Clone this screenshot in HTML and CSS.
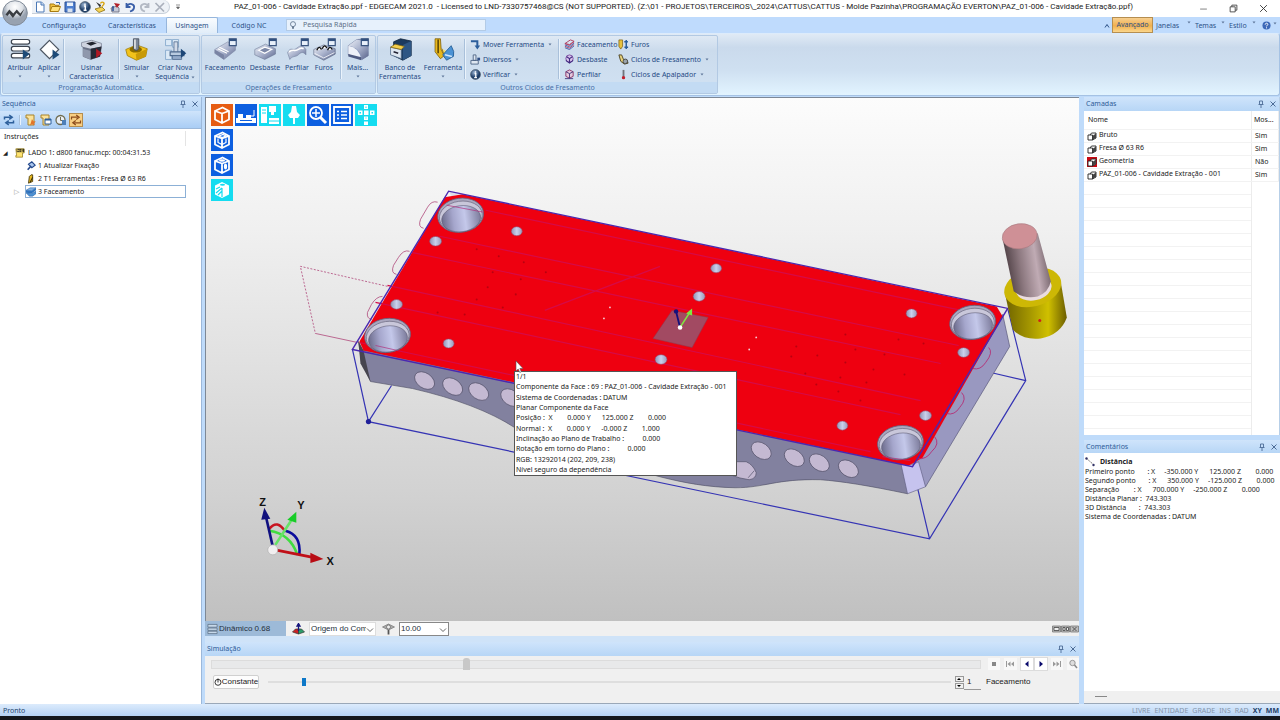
FILE: index.html
```html
<!DOCTYPE html>
<html lang="pt-BR">
<head>
<meta charset="utf-8">
<title>EDGECAM 2021.0</title>
<link rel="stylesheet" href="styles.css">
</head>
<body>
<svg class="defs" aria-hidden="true">
  <defs>
    <linearGradient id="steel" x1="0" x2="1"><stop offset="0" stop-color="#6d6c8c"/><stop offset=".3" stop-color="#a5a6cc"/><stop offset=".6" stop-color="#c4c8ea"/><stop offset="1" stop-color="#7d7c9c"/></linearGradient>
    <linearGradient id="pin" x1="0" x2="1"><stop offset="0" stop-color="#8f93b4"/><stop offset=".5" stop-color="#c9d0ec"/><stop offset="1" stop-color="#9a98b8"/></linearGradient>
    <linearGradient id="shank" x1="0" x2="1" y1=".2" y2="0"><stop offset="0" stop-color="#4f4045"/><stop offset=".3" stop-color="#8c787f"/><stop offset=".62" stop-color="#c0abb4"/><stop offset="1" stop-color="#55464c"/></linearGradient>
    <linearGradient id="gold" x1="0" x2="1"><stop offset="0" stop-color="#6f6300"/><stop offset=".4" stop-color="#a49600"/><stop offset=".7" stop-color="#d0c000"/><stop offset="1" stop-color="#6b5d00"/></linearGradient>
    <linearGradient id="metal" x1="0" x2="1" y2="1"><stop offset="0" stop-color="#eef1f8"/><stop offset=".5" stop-color="#a9b2cc"/><stop offset="1" stop-color="#59648c"/></linearGradient>
    <radialGradient id="orb" cx=".5" cy=".25"><stop offset="0" stop-color="#fff"/><stop offset=".6" stop-color="#dfe3e8"/><stop offset="1" stop-color="#98a2b0"/></radialGradient>
    <radialGradient id="ball" cx=".4" cy=".3"><stop offset="0" stop-color="#9db6d4"/><stop offset="1" stop-color="#1c3c66"/></radialGradient>
    <symbol id="i-info" viewBox="0 0 12 12"><circle cx="6" cy="6" r="5.4" fill="url(#ball)" stroke="#456" stroke-width=".7"/><path d="M6 2.4v1.6M5 5h1.3v4M4.6 9.3h3" stroke="#fff" stroke-width="1.4" fill="none"/></symbol>
    <symbol id="i-pin" viewBox="0 0 8 8"><path d="M2.5 1h3v3.4M2.5 1v3.4M1.5 4.5h5M4 4.5V8" stroke="#4d6c96" stroke-width=".9" fill="none"/></symbol>
    <symbol id="i-x" viewBox="0 0 8 8"><path d="M1.5 1.5l5 5M6.5 1.5l-5 5" stroke="#4d6c96" fill="none"/></symbol>
    <symbol id="i-chev" viewBox="0 0 8 8"><path d="M1 2.5l3 3 3-3" stroke="#555" fill="none" stroke-width=".9"/></symbol>
    <symbol id="i-drop" viewBox="0 0 4 3"><path d="M.5.5h3L2 2.4z" fill="#5f7799"/></symbol>
    <symbol id="i-stack" viewBox="0 0 10 10"><path d="M1 4h4.5v5H1zM3 4l1.500-2H9v5L5.500 9" fill="#fff" stroke="#222" stroke-width=".9"/><path d="M6 4.600L9 2.400V7L6 8.600z" fill="#444"/></symbol>
    <symbol id="i-refresh" viewBox="0 0 12 12"><path d="M1.500 5.500V3.200h6.200M6.200 1l3 2.200-3 2.200M10.500 6.500v2.300H4.300M5.800 6.600l-3 2.200 3 2.200" fill="none" stroke="#2d5f9b" stroke-width="1.500"/></symbol>
    <symbol id="i-cube" viewBox="0 0 22 22"><path d="M4 7L11 9.500v9.500l-7-3.500zM11 9.500l7-2.500v8.500L11 19M4 7l7.500-3.500L18 7" fill="none" stroke="#fff" stroke-width="1.800" stroke-linejoin="round"/></symbol>
    <symbol id="i-win" viewBox="0 0 30 30"><path d="M20 1h9v9h-9z" fill="#e8f0fa" stroke="#3b5680" stroke-width="1.600"/><path d="M20 1h9v3h-9z" fill="#31507f"/></symbol>
    <symbol id="i-bore" viewBox="-25 -20 50 40"><g transform="rotate(-8)"><ellipse rx="23" ry="17" fill="#a9a6be" stroke="#67607c" stroke-width=".8"/><ellipse cy="1" rx="21.500" ry="15" fill="#c9c7da" stroke="#6d6a82" stroke-width=".7"/><ellipse cy="3.500" rx="19.500" ry="13" fill="url(#steel)" stroke="#55536c" stroke-width=".5"/></g></symbol>
  </defs>
</svg>

<header class="titlebar">
  <button class="orb" aria-label="Menu"><svg viewBox="0 0 26 26"><circle cx="13" cy="13" r="12.300" fill="url(#orb)" stroke="#828c99" stroke-width="1"/><path d="M3.500 14.500l3.800-5 4 4 3.500-4 3.500 4 4-4.500-3.800 7.500-4-3.600-3.600 5-3.500-4.500-2 2.600z" fill="#3a3d42"/></svg></button>
  <div class="qat">
    <svg viewBox="0 0 12 12"><path d="M2.500 1h5l2.500 2.500V11h-7.500z" fill="#fff" stroke="#4a78b6"/><path d="M7 1v3h3" fill="#cfe0f4" stroke="#4a78b6"/></svg>
    <svg viewBox="0 0 12 12"><path d="M1 10V3h4l1 1.300h4V6" fill="#f3c23c" stroke="#a87c12"/><path d="M1 10.500l2-5h8.500l-2 5z" fill="#ffe27a" stroke="#a87c12"/><path d="M7 1.500h3.500v2" fill="none" stroke="#3668b0"/></svg>
    <svg viewBox="0 0 12 12"><path d="M1 1h10v10H1z" fill="#4d7fd0" stroke="#2a4f92"/><path d="M3 1.500h6v3.500H3z" fill="#e9f1fb"/><path d="M3.500 7.500h5V11h-5z" fill="#d8e2ee"/></svg>
    <svg><use href="#i-info"/></svg>
    <svg viewBox="0 0 12 12"><path d="M1 8l7-2 3 3-6 2.500z" fill="#f6d353" stroke="#8c7012" stroke-width=".8"/><path d="M2 1l4 5.500 1-2.500z" fill="#333"/><path d="M6.500 2.500c1-2.500 5-1 3 1.200-1 .8-1.200 1-1.200 2" fill="none" stroke="#d8a410" stroke-width="1.400"/></svg>
    <svg viewBox="0 0 12 12"><path d="M2 7l6-2 2 2v4H3z" fill="#c6cbd8" stroke="#667" stroke-width=".8"/><path d="M5 2l6 1-3 4z" fill="#b32028"/><path d="M4 5v5" stroke="#2a4f92" stroke-width="1.500"/></svg>
    <svg viewBox="0 0 12 12"><path d="M2.500 2v4h4M3 5.500C5 1 11 3 10 7c-.5 2-2 3-4 3.500" fill="none" stroke="#3a5fa8" stroke-width="1.800"/></svg>
    <svg viewBox="0 0 12 12"><path d="M9.500 2v4h-4M9 5.500C7 1 1 3 2 7c.5 2 2 3 4 3.500" fill="none" stroke="#b3b9c4" stroke-width="1.800"/></svg>
    <svg viewBox="0 0 12 12"><path d="M1.500 2l8.500 8.500M10 2l-8.500 8.500" stroke="#aab0bc" stroke-width="1.700"/></svg>
  </div>
  <span class="qatmore"><svg viewBox="0 0 6 6"><path d="M1 1h4M1.500 3h3L3 5z" fill="#666" stroke="#666" stroke-width=".7"/></svg></span>
  <h1 class="title">PAZ_01-006 - Cavidade Extração.ppf - EDGECAM 2021.0&nbsp; - Licensed to LND-7330757468@CS (NOT SUPPORTED). (Z:\01 - PROJETOS\TERCEIROS\_2024\CATTUS\CATTUS - Molde Pazinha\PROGRAMAÇÃO EVERTON\PAZ_01-006 - Cavidade Extração.ppf)</h1>
  <div class="wincontrols">
    <button aria-label="Minimizar"><svg viewBox="0 0 8 8"><path d="M1 4.500h6" stroke="#777" stroke-width=".8"/></svg></button>
    <button aria-label="Restaurar"><svg viewBox="0 0 8 8"><path d="M1 2.500h4.500V7H1zM2.500 2.500V1H7v4.500H5.500" fill="none" stroke="#444" stroke-width=".8"/></svg></button>
    <button aria-label="Fechar"><svg viewBox="0 0 8 8"><path d="M1 1l6 6M7 1L1 7" stroke="#333" stroke-width=".8"/></svg></button>
  </div>
</header>

<nav class="tabs">
  <button class="tab t1">Configuração</button>
  <button class="tab t2">Características</button>
  <button class="tab t3 active">Usinagem</button>
  <button class="tab t4">Código NC</button>
  <label class="search"><svg viewBox="0 0 8 10"><circle cx="4" cy="3.500" r="2.800" fill="none" stroke="#5a6e88" stroke-width=".9"/><path d="M3 6.500h2v2H3z" fill="#5a6e88"/></svg><input type="text" placeholder="Pesquisa Rápida" aria-label="Pesquisa Rápida"></label>
  <div class="tabright">
    <button class="caret" aria-label="Recolher"><svg viewBox="0 0 6 6"><path d="M1 4.500l2-3 2 3" fill="none" stroke="#2d5288"/></svg></button>
    <button class="adv">Avançado</button>
    <button class="m1">Janelas</button><svg class="dd"><use href="#i-drop"/></svg>
    <button class="m2">Temas</button><svg class="dd"><use href="#i-drop"/></svg>
    <button class="m3">Estilo</button><svg class="dd"><use href="#i-drop"/></svg>
    <svg class="help" viewBox="0 0 10 10"><circle cx="5" cy="5" r="4.500" fill="#3c68b8"/><path d="M3.500 4c0-2 3-2 3-.2 0 1-1.500 1-1.500 2.200M5 7v1.200" stroke="#fff" stroke-width="1.100" fill="none"/></svg><svg class="dd"><use href="#i-drop"/></svg>
  </div>
</nav>

<section class="ribbon">
  <div class="group g1">
    <div class="tools">
      <button class="big"><svg viewBox="0 0 30 30"><g fill="#fff" stroke="#3c4450" stroke-width="1.500"><rect x="3" y="2" width="24" height="6" rx="3"/><rect x="3" y="11" width="24" height="6" rx="3"/><rect x="3" y="20" width="24" height="6" rx="3"/></g><path d="M18 15l9 6-9 7z" fill="#1d4b78"/></svg><span>Atribuir</span><i><svg class="dd"><use href="#i-drop"/></svg></i></button>
      <button class="big"><svg viewBox="0 0 30 30"><path d="M15 3l12 12-12 12L3 15z" fill="#fff" stroke="#4b5460" stroke-width="1.500"/><path d="M19 15l9 7-9 6z" fill="#1d4b78"/></svg><span>Aplicar</span><i><svg class="dd"><use href="#i-drop"/></svg></i></button>
      <hr>
      <button class="big"><svg viewBox="0 0 30 30"><path d="M2 6l13-3 13 4v5l-2 12-12 4-10-4V12L2 11z" fill="#cfd4e0" stroke="#7c8496"/><path d="M2 11l12 3 14-3-2 13-12 4-10-4V12z" fill="#6a7286"/><path d="M8 7l8-2 6 2-8 3z" fill="#20242e"/><path d="M4 14l10 3v11l-10-4z" fill="#8f98ac"/><path d="M14 14l14-3-2 13-12 4z" fill="#262a36"/><path d="M21 14l8 6-8 6z" fill="#b01824"/></svg><span>Usinar<br>Característica</span></button>
      <hr>
      <button class="big"><svg viewBox="0 0 30 30"><path d="M1 15l14-6 14 5-2 10-12 5-12-6z" fill="#f2c21b" stroke="#9a7908"/><path d="M14 21l15-7-2 10-12 5z" fill="#c89a08"/><ellipse cx="14" cy="15" rx="8" ry="4" fill="#8a6b00"/><path d="M11 1h7v13c-2 3-5 3-7 0z" fill="#7b8697" stroke="#3d4654"/><path d="M13 2v12" stroke="#eee" stroke-width="2"/></svg><span>Simular</span><i><svg class="dd"><use href="#i-drop"/></svg></i></button>
      <button class="big"><svg viewBox="0 0 30 30"><path d="M2 2h8v8H2zM11 2h8v10h-8zM2 16h8v12H2z" fill="#dbe9f6" stroke="#7aa0c6"/><path d="M13 5h5v14h-5z" fill="#d2dbe8" stroke="#4a668a"/><path d="M8 18h18v5H8z" fill="#b9cbe0" stroke="#4a668a" stroke-width="1.500"/><path d="M11 23h12v5H11z" fill="#93aaca" stroke="#4a668a"/><path d="M22 14l7 6-7 6z" fill="#1c4677"/></svg><span>Criar Nova<br>Sequência <svg class="dd"><use href="#i-drop"/></svg></span></button>
    </div>
    <h2>Programação Automática.</h2>
  </div>
  <div class="group g2">
    <div class="tools">
      <button class="big"><svg viewBox="0 0 30 30"><path d="M1 15L18 5l10 5v6L13 28 1 20z" fill="url(#metal)" stroke="#7a86a2" stroke-width=".7"/><path d="M1 15l12 7v6L1 20z" fill="#7984a4"/><path d="M7 12l12 6M5 14l12 6" stroke="#fff" stroke-width="1.500" fill="none"/><use href="#i-win"/></svg><span>Faceamento</span></button>
      <button class="big"><svg viewBox="0 0 30 30"><path d="M1 15l14-7 13 6v7l-14 7-13-6z" fill="url(#metal)" stroke="#66728e" stroke-width=".7"/><path d="M6 16l8-4 9 3-9 5z" fill="#7d89a8" stroke="#fff" stroke-width="1.500"/><use href="#i-win"/></svg><span>Desbaste</span></button>
      <button class="big"><svg viewBox="0 0 30 30"><path d="M2 19c4-8 7-2 11-5s8-7 13 1v7c-4-5-7-3-10 0s-8 1-11 6z" fill="url(#metal)" stroke="#6d7a98" stroke-width=".7"/><path d="M4 18c5-4 8 0 12-3s5-2 7-1" stroke="#fff" stroke-width="2" fill="none"/><use href="#i-win"/></svg><span>Perfilar</span></button>
      <button class="big"><svg viewBox="0 0 30 30"><path d="M1 15l13-6 15 5v7l-15 8-13-7z" fill="url(#metal)" stroke="#4f5a76" stroke-width=".7"/><path d="M5 16q3-7 6-1M12 14q3-7 6-1M19 16q3-7 6-1" fill="#fff" stroke="#111" stroke-width="1.800"/><path d="M2 20l12 6 14-7" stroke="#fff" stroke-width="1" fill="none"/><use href="#i-win"/></svg><span>Furos</span></button>
      <hr>
      <button class="big"><svg viewBox="0 0 30 30"><path d="M3 10L14 2l15-1v22l-8 5L3 22z" fill="#8a98bc" stroke="#59668a" stroke-width=".7"/><path d="M3 10q14 2 17 18L3 21z" fill="#eef1f8"/><path d="M3 10L14 2q12 1 15 16v5l-8 5Q19 12 3 10z" fill="url(#metal)"/><path d="M3 21l17 4v4L3 24z" fill="#4e5a80"/><use href="#i-win"/></svg><span>Mais...</span><i><svg class="dd"><use href="#i-drop"/></svg></i></button>
    </div>
    <h2>Operações de Fresamento</h2>
  </div>
  <div class="group g3">
    <div class="tools">
      <button class="big"><svg viewBox="0 0 30 30"><path d="M6 5l9-4 14 3v19l-11 6-12-6z" fill="#1c3a5e" stroke="#10233c"/><path d="M18 9l11-5v19l-11 6z" fill="#2e5684"/><path d="M2 12l14 3v12L2 22z" fill="#dde6f0" stroke="#506a88"/><path d="M2 12l6-4 12 3-4 4z" fill="#f4cf4c" stroke="#806512"/><path d="M6 18l6 2" stroke="#223" stroke-width="2"/></svg><span>Banco de<br>Ferramentas</span></button>
      <button class="big"><svg viewBox="0 0 30 30"><path d="M4 1h7l1 14 4 8-5 4-7-9z" fill="#e9b81c" stroke="#7b5c05"/><path d="M8 2v18" stroke="#5a4403" stroke-width="2"/><path d="M13 14l4 12 3-8" fill="#f7e06d" stroke="#7b5c05"/><path d="M14 22l11-12q5 8 3 14l-9 5z" fill="#4b92d4" stroke="#20588f"/><path d="M17 22l9 2" stroke="#cfe6fa" stroke-width="2"/></svg><span>Ferramenta</span><i><svg class="dd"><use href="#i-drop"/></svg></i></button>
      <hr>
      <div class="col">
        <button class="small"><svg viewBox="0 0 12 12"><path d="M1 2.500h7V8" fill="none" stroke="#2b5e9c" stroke-width="2.200"/><path d="M5 7h6l-3 4.500z" fill="#2b5e9c"/></svg>Mover Ferramenta<svg class="dd"><use href="#i-drop"/></svg></button>
        <button class="small"><svg viewBox="0 0 12 12"><path d="M3.500 1h3v6h-3zM1 7h8v4H1z" fill="#dfe7f1" stroke="#4f6686"/><path d="M8 4h3v3H8z" fill="#2f4f86"/></svg>Diversos<svg class="dd"><use href="#i-drop"/></svg></button>
        <button class="small"><svg><use href="#i-info"/></svg>Verificar<svg class="dd"><use href="#i-drop"/></svg></button>
      </div>
      <hr>
      <div class="col">
        <button class="small"><svg viewBox="0 0 12 12"><path d="M1 5l6-4 4 1.500L6 6zM1 8l5 2 5-4M1 5l5 2 5-4" fill="none" stroke="#b03c5e"/><path d="M1 6.500l5 2 5-4M1 9.500l5 2 5-4" stroke="#3f5aa8" fill="none"/></svg>Faceamento</button>
        <button class="small"><svg viewBox="0 0 12 12"><circle cx="6" cy="5" r="4" fill="#d7c2ea" stroke="#7a4ca0"/><path d="M3 3l3 2 3-2M6 5v5M2 7l4 3 4-3" stroke="#402c80" fill="none" stroke-width="1.200"/></svg>Desbaste</button>
        <button class="small"><svg viewBox="0 0 12 12"><path d="M2 3l4-2 4 2v5l-4 2-4-2z" fill="#e5c9dc" stroke="#8c3468"/><path d="M2 3l4 2 4-2M6 5v5M1 10.500h9" stroke="#44367a" fill="none"/></svg>Perfilar</button>
      </div>
      <div class="col">
        <button class="small"><svg viewBox="0 0 12 12"><path d="M1 1h4v7l-2 3-2-3z" fill="#e8c23e" stroke="#80620c" stroke-width=".8"/><path d="M9 1v10M6.800 3h4M7 9h4" stroke="#2b5e9c" stroke-width="1.600"/></svg>Furos</button>
        <button class="small"><svg viewBox="0 0 12 12"><path d="M1 1h3l2 5 4 1 1 3-4 1-4-3z" fill="#e8d27c" stroke="#4a4222"/><circle cx="8" cy="8" r="2.500" fill="#9aa4ac" stroke="#333" stroke-width=".8"/></svg>Ciclos de Fresamento<svg class="dd"><use href="#i-drop"/></svg></button>
        <button class="small"><svg viewBox="0 0 12 12"><path d="M6 1v8" stroke="#70747c" stroke-width="2"/><circle cx="6" cy="9.500" r="1.800" fill="#c3202c"/></svg>Ciclos de Apalpador<svg class="dd"><use href="#i-drop"/></svg></button>
      </div>
    </div>
    <h2>Outros Ciclos de Fresamento</h2>
  </div>
</section>

<main class="work">
  <aside class="left">
    <div class="panelhead"><h2>Sequência</h2><svg><use href="#i-pin"/></svg><svg><use href="#i-x"/></svg></div>
    <div class="seqtools">
      <button aria-label="Atualizar"><svg><use href="#i-refresh"/></svg></button><hr>
      <button aria-label="Favorito"><svg viewBox="0 0 12 12"><path d="M1 1h8v10H3V4H1z" fill="#fbe29a" stroke="#a8832a"/><path d="M7 5l1.300 2.200 2.500.3-1.800 1.700.5 2.300L7 10.300 5 11.500" fill="#e2742a"/></svg></button>
      <button aria-label="Janela"><svg viewBox="0 0 12 12"><path d="M1 1h8v10H3V4H1z" fill="#fbe29a" stroke="#a8832a"/><path d="M5 5h6v5H5z" fill="#fff" stroke="#2d5f9b"/><path d="M5 5h6v1.500H5z" fill="#2d5f9b"/></svg></button>
      <button aria-label="Tempo"><svg viewBox="0 0 12 12"><circle cx="5.500" cy="6" r="4.500" fill="#e9eef5" stroke="#6f6b50" stroke-width="1.300"/><path d="M5.500 3v3.500h2" stroke="#6f6b50" fill="none"/><path d="M7 6h4v5H7z" fill="#4d7fb8"/></svg></button>
      <button class="on" aria-label="Regenerar"><svg viewBox="0 0 12 12"><path d="M1.500 5.500V3.200h6.200M6.200 1l3 2.200-3 2.200M10.500 6.500v2.300H4.300M5.800 6.600l-3 2.200 3 2.200" fill="none" stroke="#8c4c1c" stroke-width="1.200"/></svg></button>
    </div>
    <div class="tree">
      <h3>Instruções</h3>
      <ul>
        <li class="root"><span class="tri">◢</span><svg viewBox="0 0 12 12"><path d="M1 1h10v5H9v5H1V9h1z" fill="#ffe36e" stroke="#8a7010" stroke-width=".8"/><path d="M2 1h9v4H2z" fill="#3a3620"/><path d="M3 4V2l2 2V2M9.500 2.300H7.300V4h2.200" stroke="#ffe36e" stroke-width=".8" fill="none"/></svg>LADO 1: d800 fanuc.mcp: 00:04:31.53</li>
        <li class="child"><svg viewBox="0 0 12 12"><path d="M3 4l4-3 4 4-4 3z" fill="#aac6ee" stroke="#24488c" stroke-width="1.400"/><path d="M6 6L2 10.500" stroke="#24488c" stroke-width="2"/></svg>1 Atualizar Fixação</li>
        <li class="child"><svg viewBox="0 0 12 12"><path d="M3 11l1-8 2-2h2v8z" fill="#e8b91e" stroke="#3e3208"/><path d="M5 10l3-6" stroke="#3e3208" stroke-width="1.300"/></svg>2 T1 Ferramentas : Fresa Ø 63 R6</li>
        <li class="child sel"><span class="tri">▷</span><svg viewBox="0 0 12 12"><path d="M0 4l5-3h7L7 4.500z" fill="#7fb2e6" stroke="#2a5f9e" stroke-width=".6"/><path d="M0 4l7 .5L12 1v3L7 7.500 0 7z" fill="#2f74c0"/><path d="M0 7l7 .5L12 5v3l-4 3H4z" fill="#4c91d4" stroke="#2a5f9e" stroke-width=".6"/></svg>3 Faceamento</li>
      </ul>
    </div>
  </aside>

  <section class="center">
    <div class="canvas">
      <svg class="scene" viewBox="206 99 873 522" preserveAspectRatio="xMidYMid slice" role="img" aria-label="Peça">
        <g fill="none" stroke="#b04a7c" stroke-width=".8"><path d="M388 287L301 267L316 334" stroke-dasharray="2 1.500"/><path d="M316 334L358 343"/><path d="M438 203q-6-2-10 5l-7 12q-3 8 3 9M410 252q-6-2-11 6l-5 8q-3 8 3 9M383 297q-6 0-11 8l-4 8q-1 6 4 7"/></g>
        <g stroke="#3534b4" stroke-width="1.200" fill="none"><path d="M353 350L369 422L929 539L1025 381L1007 309M369 422L392 386M912 467L929 539M1025 381L990 373"/></g>
        <circle cx="369" cy="422" r="2.600" fill="#20209a"/>
        <path d="M359 342L363 350 908 464 907 494Q850 482 820 480C775 479 765 488 735 488C680 487 640 470 600 461Q540 446 515 428Q478 404 413 389L371 382L362 362z" fill="#82819f" stroke="#4c4b62" stroke-width=".6"/>
        <path d="M359 342L364 351 371 382 361 364z" fill="#46454f"/>
        <path d="M912 464L1002 315 1009 347 925 487z" fill="#9998c0" stroke="#5a597c" stroke-width=".7"/>
        <path d="M900 462L912 465L918 462L925 487 907 494z" fill="#c6c3ee" stroke="#5a597c" stroke-width=".6"/>
        <path d="M449 192L464 194L452 197z" fill="#dedeea"/>
        <path d="M463 195L996 307 1002 317 922 458 908 466 364 351 360 342 445 198z" fill="#ee0010"/>
        <g stroke="#d60a48" stroke-width="1.200" fill="none"><path d="M486 211L975 314M440 237L958 346M412 253L940 364M388 286L920 401M376 303L900 415M360 343L870 452M545 311L660 267"/></g>
        <path d="M988 348q5 5-3 15-5 8-13 6M961 393q6 6-2 15-5 8-13 6M934 437q6 7-3 15-5 8-14 7" fill="none" stroke="#b8206c" stroke-width=".8"/>
        <g fill="#8e0010" opacity=".55"><circle cx="477" cy="250" r="1"/><circle cx="499" cy="257" r="1"/><circle cx="524" cy="263" r="1"/><circle cx="493" cy="273" r="1"/><circle cx="521" cy="280" r="1"/><circle cx="546" cy="273" r="1"/><circle cx="488" cy="288" r="1"/><circle cx="516" cy="295" r="1"/><circle cx="503" cy="308" r="1"/><circle cx="477" cy="300" r="1"/><circle cx="438" cy="313" r="1"/><circle cx="465" cy="315" r="1"/><circle cx="845" cy="335" r="1"/><circle cx="796" cy="347" r="1"/><circle cx="791" cy="357" r="1"/><circle cx="817" cy="356" r="1"/><circle cx="855" cy="350" r="1"/><circle cx="884" cy="355" r="1"/><circle cx="923" cy="344" r="1"/><circle cx="898" cy="340" r="1"/><circle cx="845" cy="363" r="1"/><circle cx="805" cy="374" r="1"/><circle cx="840" cy="378" r="1"/><circle cx="873" cy="370" r="1"/><circle cx="904" cy="375" r="1"/><circle cx="816" cy="385" r="1"/><circle cx="838" cy="392" r="1"/><circle cx="866" cy="383" r="1"/><circle cx="860" cy="401" r="1"/></g>
        <g fill="#f6cdd6"><circle cx="610" cy="308" r=".9"/><circle cx="604" cy="319" r=".9"/><circle cx="756" cy="338" r=".9"/><circle cx="749" cy="350" r=".9"/></g>
        <path d="M353 350L449 192L1007 309L912 467z" fill="none" stroke="#4a28b0" stroke-width="1.400"/>
        <use href="#i-bore" x="436" y="196" width="50" height="40"/>
        <use href="#i-bore" x="363" y="316" width="50" height="40"/>
        <use href="#i-bore" x="947" y="303" width="50" height="40"/>
        <use href="#i-bore" x="875" y="423" width="50" height="40"/>
        <path d="M447 206L484 213M376 346L398 351M882 457L910 461" stroke="#b0307c" stroke-width=".7"/>
        <g fill="url(#pin)" stroke="#9b4060" stroke-width=".6"><ellipse cx="517" cy="232" rx="5.500" ry="4.500"/><ellipse cx="436" cy="242" rx="6" ry="4.800"/><ellipse cx="397" cy="305" rx="6" ry="4.800"/><ellipse cx="449" cy="344" rx="5.500" ry="4.500"/><ellipse cx="716" cy="269" rx="5.500" ry="4.500"/><ellipse cx="699" cy="297" rx="6" ry="4.800"/><ellipse cx="661" cy="360" rx="6" ry="4.800"/><ellipse cx="911" cy="314" rx="5.500" ry="4.500"/><ellipse cx="963" cy="353" rx="6" ry="4.800"/><ellipse cx="925" cy="416" rx="6" ry="4.800"/><ellipse cx="842" cy="426" rx="5.500" ry="4.500"/></g>
        <g fill="#c4b9d2" stroke="#55536c" stroke-width=".7"><ellipse cx="425" cy="381" rx="11" ry="7.500" transform="rotate(35 425 381)"/><ellipse cx="453" cy="387" rx="11" ry="7.500" transform="rotate(35 453 387)"/><ellipse cx="479" cy="392" rx="11" ry="7.500" transform="rotate(35 479 392)"/><ellipse cx="511" cy="398" rx="11" ry="7.500" transform="rotate(35 511 398)"/><ellipse cx="761" cy="451" rx="11" ry="7.500" transform="rotate(35 761 451)"/><ellipse cx="794" cy="458" rx="11" ry="7.500" transform="rotate(35 794 458)"/><ellipse cx="819" cy="463" rx="11" ry="7.500" transform="rotate(35 819 463)"/><ellipse cx="848" cy="469" rx="11" ry="7.500" transform="rotate(35 848 469)"/><path d="M730 462h16q7 3 10 11 0 6-7 7-9-1-19-5zM748 478l6-7"/></g>
        <path d="M672 311L708 318L692 348L653 339z" fill="#a24a62" stroke="#8a3a50" stroke-width=".5"/>
        <path d="M680 328L676 312" stroke="#14107c" stroke-width="1.800"/><circle cx="676" cy="312" r="2.200" fill="#14107c"/>
        <path d="M680 328L691 311" stroke="#7fe840" stroke-width="1.600"/><path d="M686 314l6-5 0 7z" fill="#7fe840"/><circle cx="680" cy="328" r="2.300" fill="#fff"/>
        <path d="M1004 293L1012 330Q1022 341 1040 339Q1060 335 1066 318L1060 283z" fill="url(#gold)"/>
        <ellipse cx="1032" cy="288" rx="29" ry="19" fill="#cdb805" transform="rotate(-15 1032 288)"/>
        <ellipse cx="1033" cy="289" rx="18" ry="12" fill="#eadce0" transform="rotate(-12 1033 289)"/>
        <path d="M1002 240L1013 292Q1024 300 1037 297Q1048 293 1050 282L1037 234z" fill="url(#shank)"/>
        <ellipse cx="1019" cy="237" rx="17.500" ry="12.500" fill="#cf9096" stroke="#a0767c" stroke-width=".5" transform="rotate(-8 1019 237)"/>
        <circle cx="1039" cy="321" r="1.500" fill="#d02018"/>
        <g fill="none" stroke-width="2.600"><path d="M270 529q8-10 16 3" stroke="#c81420"/><path d="M286 531q16 4 14 24" stroke="#0c0c9c"/><path d="M270 531q21 3 28 24" stroke="#40dc40"/><path d="M274 549L266 514" stroke="#101080"/><path d="M276 545L293 519" stroke="#66e266"/><path d="M276 550L316 558" stroke="#c01018"/></g>
        <path d="M262 520l3-12 6 11z" fill="#10107c"/><path d="M288 520l9-8v11z" fill="#18cc28"/><path d="M311 553l13 6-13 4z" fill="#b80c14"/><circle cx="273.500" cy="550" r="5" fill="#f1eff0" stroke="#aaa" stroke-width=".6"/>
        <g class="axis"><text x="260" y="506">Z</text><text x="298" y="509">Y</text><text x="327" y="565">X</text></g>
      </svg>
      <div class="viewtools">
        <button class="orange" aria-label="Isométrica"><svg><use href="#i-cube"/></svg></button>
        <button class="blue" aria-label="Máquina"><svg viewBox="0 0 22 22"><path d="M1 14h20v5H1zM3 10h5v4H3zM11 11h5v3h-5z" fill="#fff"/><path d="M16 12h3V6" fill="none" stroke="#fff"/><path d="M5 16.500h12" stroke="#0d5fe0"/></svg></button>
        <button class="cyan" aria-label="Fixação"><svg viewBox="0 0 22 22"><path d="M2 3h6v16H2zM10 14h10v6H10zM10 2h7v6h-2v3h-3V8h-2z" fill="#fff"/><path d="M3 6h4M3 9h4M10 17h10" stroke="#15dcf0"/></svg></button>
        <button class="cyan" aria-label="Ferramenta"><svg viewBox="0 0 22 22"><path d="M9 2h4l1 6 3 3-2 3h-3v6h-2v-6H7l-2-3 3-3z" fill="#fff"/></svg></button>
        <button class="blue" aria-label="Zoom"><svg viewBox="0 0 22 22"><circle cx="9" cy="9" r="6" fill="none" stroke="#fff" stroke-width="1.800"/><path d="M13.500 13.500L19 19" stroke="#fff" stroke-width="3"/><path d="M9 5v8M5 9h8" stroke="#fff" stroke-width="1.500"/></svg></button>
        <button class="blue" aria-label="Lista"><svg viewBox="0 0 22 22"><path d="M3 3h16v16H3z" fill="none" stroke="#fff" stroke-width="1.800"/><path d="M6 7.500h2M10 7.500h6M6 11h2M10 11h6M6 14.500h2M10 14.500h6" stroke="#fff" stroke-width="1.500"/></svg></button>
        <button class="cyan" aria-label="Vistas"><svg viewBox="0 0 22 22"><path d="M9 1h4v4H9zM9 6.500h4.500v4.500H9zM9 12.500h4v3.500H9zM9 17.500h4V21H9zM3 6.500h4.500v4.500H3zM15 6.500h4.500v4.500H15z" fill="#fff"/><path d="M4.500 8h1.500v1.500H4.500zM16.500 8H18v1.500h-1.500zM10.500 2.500h1V4h-1zM10.500 13.500h1v1h-1z" fill="#15dcf0"/></svg></button>
        <button class="blue" aria-label="Contorno"><svg><use href="#i-cube"/><path d="M7 9.500v4l4 2 4-2v-4M8 7l4-1.500 3 1.500-4 1.500z" stroke="#fff" fill="none" stroke-width="1.200"/></svg></button>
        <button class="blue newrow" aria-label="Faces"><svg><use href="#i-cube"/><ellipse cx="14.500" cy="12.500" rx="1.600" ry="3" fill="#fff"/><ellipse cx="11" cy="6.500" rx="3" ry="1.200" fill="#fff"/></svg></button>
        <button class="cyan newrow" aria-label="Sombreado"><svg viewBox="0 0 22 22"><path d="M4 6.500L11 3l7 3.500v9L11 19l-7-3.500z" fill="#fff"/><path d="M5 10l4-2M5 14l6-5M7 16l4-4M11 9v9" stroke="#15dcf0" stroke-width="1.200"/><ellipse cx="11.500" cy="5.800" rx="2.500" ry="1" fill="#15dcf0"/></svg></button>
      </div>
      <div class="tip" role="tooltip">
        <p>1/1</p><p>Componente da Face : 69 : PAZ_01-006 - Cavidade Extração - 001</p><p>Sistema de Coordenadas : DATUM</p><p>Planar Componente da Face</p><p>Posição :  X        0.000 Y      125.000 Z        0.000</p><p>Normal :  X        0.000 Y      -0.000 Z        1.000</p><p>Inclinação ao Plano de Trabalho :          0.000</p><p>Rotação em torno do Plano :          0.000</p><p>RGB: 13292014 (202, 209, 238)</p><p>Nível seguro da dependência</p>
        <svg class="cursor" viewBox="0 0 8 12"><path d="M1 0v10l2.200-2 1.600 3.500 1.500-.7L4.800 7.500H8z" fill="#fff" stroke="#555" stroke-width=".6"/></svg>
      </div>
    </div>
    <div class="viewbar">
      <button class="dyn"><svg viewBox="0 0 12 12"><path d="M1 1h10v3H1zM1 5h10v2.500H1zM1 8.500h10V11H1z" fill="#c7d9ea" stroke="#4e6177" stroke-width=".7"/></svg>Dinâmico 0.68</button>
      <svg class="vicon" viewBox="0 0 12 12"><path d="M0 9l3-3h3v5z" fill="#c22" stroke="#333" stroke-width=".7"/><path d="M6 11V6h3l3 3z" fill="#2a9c68" stroke="#333" stroke-width=".7"/><path d="M6 8V1M4.500 3L6 .5 7.500 3z" stroke="#15157c" fill="#15157c" stroke-width="1.300"/></svg>
      <span class="selwrap s1"><select aria-label="Origem"><option>Origem do Componente</option></select><svg><use href="#i-chev"/></svg></span>
      <svg class="vicon" viewBox="0 0 12 12"><path d="M0 4l6-3 6 3-6 3z" fill="#aaa" stroke="#777" stroke-width=".7"/><circle cx="6" cy="4" r="2" fill="#eee" stroke="#666" stroke-width=".7"/><path d="M6 7v4.500" stroke="#555" stroke-width="1.800"/></svg>
      <span class="selwrap s2"><select aria-label="Passo"><option>10.00</option></select><svg><use href="#i-chev"/></svg></span>
      <svg class="mdi" viewBox="0 0 27 8"><path d="M.5 1h8v6h-8zM9.500 1h8v6h-8zM18.500 1h8v6h-8z" fill="#bbb" stroke="#777" stroke-width=".8"/><path d="M2 2.500h5v3H2zM11 2.500h2v3h-2zM14.500 2.500h2v3h-2z" fill="#eee" stroke="#444" stroke-width=".8"/><path d="M20.500 2l4 4M24.500 2l-4 4" stroke="#555"/></svg>
    </div>
    <section class="sim">
      <div class="panelhead"><h2>Simulação</h2><svg><use href="#i-pin"/></svg><svg><use href="#i-x"/></svg></div>
      <div class="simrow">
        <input class="prog" type="range" min="0" max="100" value="33" aria-label="Progresso">
        <div class="play">
          <button aria-label="Parar"><svg viewBox="0 0 10 10"><path d="M3 3h4v4H3z" fill="#888"/></svg></button>
          <button class="wide" aria-label="Início"><svg viewBox="0 0 10 10"><path d="M1.500 2v6" stroke="#999"/><path d="M5.500 2.500v5L2.500 5zM9 2.500v5L6 5z" fill="#999"/></svg></button>
          <button class="live" aria-label="Voltar"><svg viewBox="0 0 10 10"><path d="M6.500 2v6L3 5z" fill="#0a0a6c"/></svg></button>
          <button class="live" aria-label="Avançar"><svg viewBox="0 0 10 10"><path d="M3.500 2v6L7 5z" fill="#0a0a6c"/></svg></button>
          <button class="wide" aria-label="Fim"><svg viewBox="0 0 10 10"><path d="M8.500 2v6" stroke="#999"/><path d="M4.500 2.500v5L7.500 5zM1 2.500v5L4 5z" fill="#999"/></svg></button>
          <button aria-label="Zoom"><svg viewBox="0 0 10 10"><circle cx="4.500" cy="4" r="2.700" fill="#ddd" stroke="#999"/><path d="M6.500 6L9 9" stroke="#888" stroke-width="1.500"/></svg></button>
        </div>
      </div>
      <div class="simrow second">
        <button class="const"><svg viewBox="0 0 8 8"><circle cx="4" cy="4.300" r="3" fill="none" stroke="#222" stroke-width=".9"/><path d="M4 .5v4" stroke="#222" stroke-width=".9"/></svg>Constante</button>
        <input class="speed" type="range" min="0" max="100" value="5" aria-label="Velocidade">
        <div class="spin"><button aria-label="Mais"><svg viewBox="0 0 6 4"><path d="M1 3h4L3 1z"/></svg></button><button aria-label="Menos"><svg viewBox="0 0 6 4"><path d="M1 1h4L3 3z"/></svg></button></div>
        <input class="num" type="text" value="1" aria-label="Instrução">
        <span class="opname">Faceamento</span>
      </div>
    </section>
  </section>

  <aside class="right">
    <section class="layers">
      <div class="panelhead"><h2>Camadas</h2><svg><use href="#i-pin"/></svg><svg><use href="#i-x"/></svg></div>
      <table>
        <thead><tr><th>Nome</th><th class="show">Mos...</th></tr></thead>
        <tbody>
          <tr><td><svg><use href="#i-stack"/></svg>Bruto</td><td>Sim</td></tr>
          <tr><td><svg><use href="#i-stack"/></svg>Fresa Ø 63 R6</td><td>Sim</td></tr>
          <tr><td><svg class="redbg"><use href="#i-stack"/></svg>Geometria</td><td>Não</td></tr>
          <tr><td><svg><use href="#i-stack"/></svg>PAZ_01-006 - Cavidade Extração - 001</td><td>Sim</td></tr>
        </tbody>
      </table>
      <div class="rules"></div>
    </section>
    <section class="comments">
      <div class="panelhead"><h2>Comentários</h2><svg><use href="#i-pin"/></svg><svg><use href="#i-x"/></svg></div>
      <div class="notes">
        <h3><svg viewBox="0 0 10 10"><path d="M1 1l8 7" stroke="#555" stroke-width=".8" stroke-dasharray="2 1"/><circle cx="1.500" cy="1.500" r="1.200" fill="#336"/><circle cx="8.500" cy="8" r="1.200" fill="#336"/></svg>Distância</h3>
        <p>Primeiro ponto       : X     -350.000 Y      125.000 Z        0.000</p>
        <p>Segundo ponto       : X      350.000 Y     -125.000 Z        0.000</p>
        <p>Separação        : X      700.000 Y     -250.000 Z        0.000</p>
        <p>Distância Planar :  743.303</p>
        <p>3D Distância       :  743.303</p>
        <p>Sistema de Coordenadas : DATUM</p>
      </div>
      <div class="hscroll"><span></span></div>
    </section>
  </aside>
</main>

<footer class="status"><span class="ready">Pronto</span><span>LIVRE</span><span>ENTIDADE</span><span>GRADE</span><span>INS</span><span>RAD</span><b>XY</b><b>MM</b></footer>
<div class="taskline"></div>
</body>
</html>
```
FILE: styles.css
```css
* { box-sizing: border-box; }
body { margin: 0; min-height: 100vh; display: flex; flex-direction: column; overflow: hidden; background: #bfdbfa; color: #26303c; font: 7px/10px "Noto Sans", "Open Sans", sans-serif; }
h1, h2, h3, p, ul { margin: 0; padding: 0; font-size: inherit; font-weight: 400; }
ul { list-style: none; }
button, input, select { font: inherit; color: inherit; margin: 0; padding: 0; border: 0; background: none; }
button { white-space: nowrap; }
svg { flex: none; display: block; }
hr { margin: 0; border: 0; border-left: 1px solid #a9c0da; border-right: 1px solid #eaf3fc; width: 2px; }
.defs { position: absolute; width: 0; height: 0; }
.dd { width: 4px; height: 3px; display: inline-block; vertical-align: middle; }

.titlebar { position: relative; z-index: 2; height: 17px; display: flex; align-items: center; background: #fff; padding-left: 32px; padding-bottom: 3px; }
.orb { position: absolute; left: 2px; top: 0; width: 26px; height: 26px; }
.orb svg { width: 26px; height: 26px; }
.qat { display: flex; gap: 3px; width: 138px; height: 14px; padding-left: 2px; align-items: center; border: 1px solid #c8d0da; border-left: 0; border-top: 0; border-radius: 0 8px 8px 0; background: #eef2f7; }
.qat svg { width: 12px; height: 12px; }
.qatmore { width: 16px; padding-left: 5px; }
.qatmore svg { width: 6px; height: 6px; }
.title { flex: 1; text-align: center; color: #222; font: 8px/14px Roboto, sans-serif; white-space: nowrap; padding-right: 18px; }
.wincontrols { display: flex; gap: 21px; padding-right: 12px; padding-top: 2px; }
.wincontrols svg { width: 9px; height: 9px; }

.tabs { display: flex; align-items: stretch; height: 16px; background: #bfdbfd; color: #2d5288; padding-left: 30px; }
.tab { text-align: center; padding-top: 1px; }
.t1 { width: 68px; } .t2 { width: 68px; } .t3 { width: 52px; } .t4 { width: 62px; }
.tab.active { background: linear-gradient(#f9fcff, #e2edf8); border: 1px solid #96b6dc; border-bottom: 0; border-radius: 2px 2px 0 0; }
.search { display: flex; align-items: center; gap: 6px; width: 200px; margin: 2px 0 2px 6px; padding-left: 2px; background: #e7f1fc; border: 1px solid #b3cbe6; }
.search svg { width: 8px; height: 9px; }
.search input { flex: 1; min-width: 0; }
.search input::placeholder { color: #5c6f88; opacity: 1; }
.tabright { margin-left: auto; display: flex; align-items: center; padding-right: 3px; }
.tabright > button { height: 16px; text-align: left; padding-left: 3px; padding-top: 1px; }
.tabright .caret { width: 12px; padding-left: 4px; }
.caret svg { width: 6px; height: 6px; }
.m1 { width: 32px; } .m2 { width: 27px; } .m3 { width: 24px; }
.tabright .dd { margin: 0 1px 5px 2px; }
.tabright .adv { width: 41px; background: linear-gradient(#f7cf90, #f0b04e 55%, #fbd68b); border: 1px solid #b58e50; padding: 0; text-align: center; }
.help { width: 9px; height: 9px; margin-left: 5px; }
.tabright .help + .dd { margin: 0 0 3px 2px; }

.ribbon { display: flex; gap: 1px; height: 63px; padding: 1px 2px 1px 1px; background: linear-gradient(#e0eaf5, #cadaec 22%, #cfe0f1 60%, #e2f4ff); border: 1px solid #a5c2e4; border-top-color: #dcebfb; border-radius: 3px; color: #1f4a84; }
.group { display: flex; flex-direction: column; border: 1px solid #b2c9e3; border-radius: 2px; background: linear-gradient(#dfe9f4, #cbdbec 25%, #d1e2f3); }
.g1 { width: 198px; } .g2 { width: 175px; } .g3 { width: 341px; }
.group h2 { flex: none; height: 11px; line-height: 11px; text-align: center; background: #c3dbf3; color: #466ea6; }
.tools { flex: 1; min-height: 0; display: grid; align-items: start; padding: 0 2px; }
.tools hr { height: 40px; margin-top: 3px; }
.g1 .tools { grid-template-columns: 30px 28px 2px 53px 2px 33px 1fr; }
.g2 .tools { grid-template-columns: 42px 38px 26px 28px 2px 1fr; padding-right: 0; }
.g2 hr { margin-left: 2px; }
.g3 .tools { grid-template-columns: 44px 42px 2px 92px 2px 58px 1fr; padding-left: 0; }
.big { display: flex; flex-direction: column; align-items: center; line-height: 9px; }
.big > svg { width: 25px; height: 25px; margin: 1px 0; padding: 1px; }
.big > i { line-height: 8px; height: 8px; }
.col { display: grid; grid-template-rows: 15px 15px 15px; padding-left: 4px; padding-top: 1px; }
.col:last-child { padding-left: 0; }
.small { display: flex; align-items: center; gap: 2px; }
.small > svg:first-child { width: 11px; height: 11px; }
.small .dd { margin-left: 2px; }

.work { flex: 1; display: flex; padding-top: 1px; min-height: 0; }
.panelhead { flex: none; display: flex; align-items: center; height: 14px; padding: 0 2px; gap: 4px; color: #2f5c98; background: linear-gradient(#cfe4fb, #b7d6f6); }
.panelhead h2 { flex: 1; }
.panelhead svg { width: 8px; height: 8px; }
.left { width: 202px; display: flex; flex-direction: column; border-right: 1px solid #9cb8da; }
.seqtools { display: flex; align-items: center; gap: 1px; height: 18px; padding-left: 2px; background: linear-gradient(#cfe4fb, #a9cdf5); border-bottom: 1px solid #9cb8da; }
.seqtools hr { height: 10px; margin: 0 2px; }
.seqtools button { width: 14px; height: 14px; padding: 1px; }
.seqtools svg { width: 12px; height: 12px; }
.seqtools .on { background: #f8ce82; border: 1px solid #b58e50; padding: 0; }
.tree { flex: 1; background: #fff; padding-top: 2px; color: #222; }
.tree h3 { height: 15px; line-height: 12px; padding-left: 4px; margin-right: 15px; border-right: 1px solid #e4e4e4; }
.tree li { display: flex; align-items: center; height: 13px; gap: 3px; }
.tree li svg { width: 10px; height: 10px; }
.tree .root { padding-left: 3px; }
.tree .root .tri { width: 9px; font-size: 6px; }
.tree .child { padding-left: 26px; gap: 2px; }
.tree .sel { margin: 0 15px 0 25px; padding-left: 0; border: 1px solid #8cb0d6; position: relative; }
.tree .sel .tri { position: absolute; left: -12px; font-size: 7px; color: #999; }

.center { flex: 1; min-width: 0; display: flex; flex-direction: column; margin-left: 3px; }
.canvas { position: relative; flex: 1; min-height: 0; overflow: hidden; border-top: 1px solid #7d8896; border-left: 1px solid #7d8896; background: linear-gradient(#fcfcfc, #f0f0f0 25%, #d2d2d2 75%, #c0c0c0); }
.scene { width: 100%; height: 100%; }
.axis { font: 700 11px "Liberation Sans", sans-serif; fill: #111; }
.viewtools { position: absolute; left: 5px; top: 6px; display: grid; grid-template-columns: repeat(7, 22px); gap: 3px 2px; }
.viewtools button { width: 22px; height: 22px; }
.viewtools svg { width: 22px; height: 22px; }
.newrow { grid-column: 1; }
.orange { background: #e65c12; } .blue { background: #0d5fe0; } .cyan { background: #15dcf0; }
.tip { position: absolute; left: 308px; top: 273px; width: 223px; min-height: 105px; padding-left: 1px; display: flex; flex-direction: column; justify-content: space-between; background: #fff; border: 1px solid #555; color: #222; }
.tip p, .notes p { white-space: pre; }
.cursor { position: absolute; left: 0; top: -11px; width: 8px; height: 12px; }

.viewbar { display: flex; align-items: center; height: 15px; background: #f0f0f0; font-size: 8px; font-family: "Liberation Sans", sans-serif; }
.dyn { display: flex; align-items: center; gap: 1px; width: 81px; height: 15px; padding-left: 2px; background: #9dbad8; }
.dyn svg { width: 11px; height: 12px; }
.vicon { width: 13px; height: 12px; margin: 0 4px 0 6px; }
.selwrap { position: relative; display: flex; height: 14px; background: #fff; border: 1px solid #ddd; }
.selwrap select { appearance: none; width: 100%; padding: 0 9px 0 1px; outline: 0; }
.selwrap svg { position: absolute; right: 1px; top: 3px; width: 8px; height: 8px; pointer-events: none; }
.s1 { width: 67px; } .s2 { width: 50px; border-color: #888; }
.mdi { width: 27px; height: 8px; margin-left: auto; }

.sim { height: 68px; padding-top: 6px; display: flex; flex-direction: column; background: linear-gradient(#cfe3f8 7px, #f0f0f0 7px); border-bottom: 1px solid #9aa8b8; }
.simrow { display: flex; align-items: center; height: 16px; padding-left: 6px; }
.simrow.second { height: 20px; padding-left: 8px; font-size: 8px; font-family: "Liberation Sans", sans-serif; color: #222; }
input[type=range] { appearance: none; min-width: 0; }
.prog { flex: 1; height: 9px; background: #e8e9ea; border: 1px solid #dcdcdc; }
.prog::-webkit-slider-thumb { appearance: none; width: 7px; height: 12px; background: #c8c8c8; border-radius: 3px 3px 0 0; }
.play { display: flex; gap: 2px; width: 98px; padding-left: 7px; }
.play button { width: 12px; height: 12px; padding: 1px; background: #f8f8f8; }
.play .live { background: #fff; outline: 1px solid #dcdcdc; }
.play svg { width: 10px; height: 10px; margin: auto; }
.play .wide { width: 14px; margin: 0 2px; }
.const { display: flex; align-items: center; justify-content: center; width: 46px; height: 14px; background: #fdfdfd; border: 1px solid #d0d0d0; border-radius: 2px; }
.const svg { width: 8px; height: 8px; }
.speed { flex: 1; margin-left: 9px; height: 12px; background: linear-gradient(#f0f0f0 5px, #dedede 5px 7px, #f0f0f0 7px); }
.speed::-webkit-slider-thumb { appearance: none; width: 4px; height: 8px; background: #0d78c8; }
.spin { display: grid; gap: 1px; margin-left: 4px; }
.spin button { width: 9px; height: 6px; border: 1px solid #999; }
.spin svg { width: 6px; height: 4px; }
.num { width: 17px; height: 15px; padding-left: 3px; border-bottom: 1px solid #999; }
.opname { width: 98px; padding-left: 5px; }

.right { width: 196px; margin-left: 5px; display: flex; flex-direction: column; color: #222; }
.layers { flex: 1; display: flex; flex-direction: column; background: #fff; border-right: 1px solid #b7cfe8; }
.layers table { border-collapse: collapse; width: 100%; table-layout: fixed; }
.layers th, .layers td { text-align: left; font-weight: 400; padding: 0 0 0 3px; height: 13px; white-space: nowrap; border-right: 1px solid #ececec; border-bottom: 1px solid #f2f2f2; }
.layers th { height: 18px; padding-left: 4px; padding-top: 1px; }
.layers th.show { width: 27px; padding-left: 2px; }
.layers td svg { display: inline-block; vertical-align: middle; width: 10px; height: 10px; margin-right: 2px; }
.layers .redbg { background: #c80812; }
.rules { flex: 1; background: repeating-linear-gradient(#fff 0 12px, #f2f2f2 12px 13px); border-right: 1px solid #ececec; margin-right: 27px; }
.comments { height: 269px; display: flex; flex-direction: column; border-top: 5px solid #bfdbfa; border-bottom: 1px solid #9aa8b8; background: #fff; }
.comments .panelhead { height: 13px; }
.notes { flex: 1; padding: 4px 1px; line-height: 9px; }
.notes h3 { display: flex; font-weight: 700; gap: 5px; height: 10px; line-height: 10px; }
.notes h3 svg { width: 10px; height: 10px; }
.hscroll { height: 12px; background: #f0f0f0; padding: 5px 11px; }
.hscroll span { display: block; width: 12px; height: 1px; background: #888; }

.status { display: flex; align-items: center; height: 12px; padding: 2px 1px 0 3px; gap: 4px; background: linear-gradient(#dcebfc, #b5d2f4); color: #8595ab; }
.ready { margin-right: auto; color: #26466e; }
.status b { color: #223c66; font-weight: 700; }
.taskline { height: 4px; background: #14171c; }
```
